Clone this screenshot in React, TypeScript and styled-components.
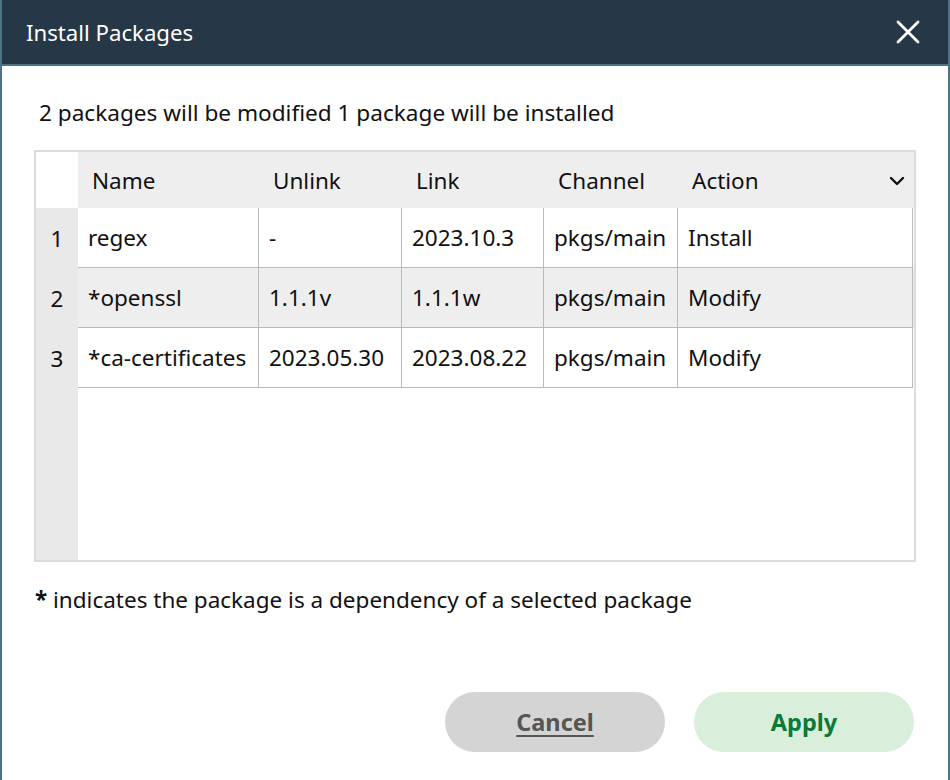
import React from "react";
import styled, { createGlobalStyle } from "styled-components";

const Global = createGlobalStyle`
  html, body { margin: 0; padding: 0; background: #ffffff; }
  body { font-family: "Noto Sans", "Open Sans", sans-serif; color: #111; }
`;

const Window = styled.div`
  width: 950px;
  height: 780px;
  box-sizing: border-box;
  border-left: 2px solid #4b7486;
  border-right: 2px solid #4b7486;
  display: flex;
  flex-direction: column;
  background: #fff;
`;

const TitleBar = styled.div`
  height: 64px;
  background: #263748;
  border-bottom: 2px solid #4b7486;
  display: flex;
  align-items: center;
  justify-content: space-between;
  padding: 0 28px 0 24px;
`;

const Title = styled.div`
  color: #fff;
  font-size: 22.2px;
`;

const CloseButton = styled.button`
  border: 0;
  background: transparent;
  padding: 0;
  width: 24px;
  height: 24px;
  display: flex;
  cursor: pointer;
`;

const Body = styled.div`
  flex: 1;
  display: flex;
  flex-direction: column;
  padding: 32px 32px 28px 32px;
`;

const Message = styled.div`
  font-size: 22.6px;
  line-height: 30px;
  padding-left: 5px;
  margin-bottom: 22px;
`;

const TableBox = styled.div`
  height: 412px;
  box-sizing: border-box;
  border: 2px solid #dcdcdc;
  display: grid;
  grid-template-columns: 42px 1fr;
  grid-template-rows: 56px 1fr;
`;

const Corner = styled.div`
  background: #fff;
`;

const HeaderRow = styled.div`
  background: #eeeeee;
  display: grid;
  grid-template-columns: 181px 143px 142px 134px 1fr;
  align-items: center;
`;

const HeadCell = styled.div`
  padding-left: 14px;
  font-size: 22.5px;
  color: #111;
  display: flex;
  align-items: center;
  justify-content: space-between;
  padding-right: 9px;
  padding-top: 1px;
`;

const RowHeader = styled.div`
  background: #e9e9e9;
  display: flex;
  flex-direction: column;
`;

const RowNum = styled.div`
  height: 60px;
  display: flex;
  align-items: center;
  justify-content: center;
  font-size: 22.5px;
  padding-top: 1px;
  box-sizing: border-box;
`;

const DataArea = styled.div`
  display: flex;
  flex-direction: column;
  background: #fff;
`;

const Row = styled.div<{ $alt?: boolean }>`
  height: 60px;
  box-sizing: border-box;
  display: grid;
  grid-template-columns: 181px 143px 142px 134px 235px;
  background: ${(p) => (p.$alt ? "#eeeeee" : "#ffffff")};
`;

const Cell = styled.div`
  border-right: 1px solid #b9b9b9;
  border-bottom: 1px solid #b9b9b9;
  display: flex;
  align-items: center;
  padding-left: 10px;
  font-size: 22.5px;
  white-space: nowrap;
  overflow: hidden;
  color: #111;
`;

const Legend = styled.div`
  margin-top: 22px;
  font-size: 22.5px;
  padding-left: 1px;
`;

const Star = styled.span`
  font-weight: 700;
`;

const Footer = styled.div`
  margin-top: auto;
  display: flex;
  justify-content: flex-end;
  gap: 29px;
  padding-right: 2px;
`;

const PillButton = styled.button<{ $variant: "cancel" | "apply" }>`
  width: 220px;
  height: 60px;
  border: 0;
  border-radius: 30px;
  font-family: "Noto Sans", "Open Sans", sans-serif;
  font-size: 23.5px;
  font-weight: 700;
  cursor: pointer;
  background: ${(p) => (p.$variant === "cancel" ? "#d4d4d4" : "#d9efdb")};
  color: ${(p) => (p.$variant === "cancel" ? "#555555" : "#0a7a38")};
  text-decoration: ${(p) => (p.$variant === "cancel" ? "underline" : "none")};
  text-underline-offset: 4px;
  text-decoration-thickness: 2px;
`;

const rows = [
  ["regex", "-", "2023.10.3", "pkgs/main", "Install"],
  ["*openssl", "1.1.1v", "1.1.1w", "pkgs/main", "Modify"],
  ["*ca-certificates", "2023.05.30", "2023.08.22", "pkgs/main", "Modify"],
];

export default function App() {
  return (
    <>
      <Global />
      <Window>
        <TitleBar>
          <Title>Install Packages</Title>
          <CloseButton aria-label="Close">
            <svg width="24" height="24" viewBox="0 0 24 24">
              <path d="M2 2 L22 22 M22 2 L2 22" stroke="#fff" strokeWidth="2.8" strokeLinecap="round" />
            </svg>
          </CloseButton>
        </TitleBar>
        <Body>
          <Message>2 packages will be modified 1 package will be installed</Message>
          <TableBox>
            <Corner />
            <HeaderRow>
              <HeadCell>Name</HeadCell>
              <HeadCell>Unlink</HeadCell>
              <HeadCell>Link</HeadCell>
              <HeadCell>Channel</HeadCell>
              <HeadCell>
                Action
                <svg width="16" height="10" viewBox="0 0 16 10">
                  <path d="M2 2 L8 8 L14 2" stroke="#111" strokeWidth="2.4" fill="none" strokeLinecap="round" strokeLinejoin="round" />
                </svg>
              </HeadCell>
            </HeaderRow>
            <RowHeader>
              {rows.map((_, i) => (
                <RowNum key={i}>{i + 1}</RowNum>
              ))}
            </RowHeader>
            <DataArea>
              {rows.map((r, i) => (
                <Row key={i} $alt={i === 1}>
                  {r.map((c, j) => (
                    <Cell key={j}>{c}</Cell>
                  ))}
                </Row>
              ))}
            </DataArea>
          </TableBox>
          <Legend>
            <Star>*</Star> indicates the package is a dependency of a selected package
          </Legend>
          <Footer>
            <PillButton $variant="cancel">Cancel</PillButton>
            <PillButton $variant="apply">Apply</PillButton>
          </Footer>
        </Body>
      </Window>
    </>
  );
}
